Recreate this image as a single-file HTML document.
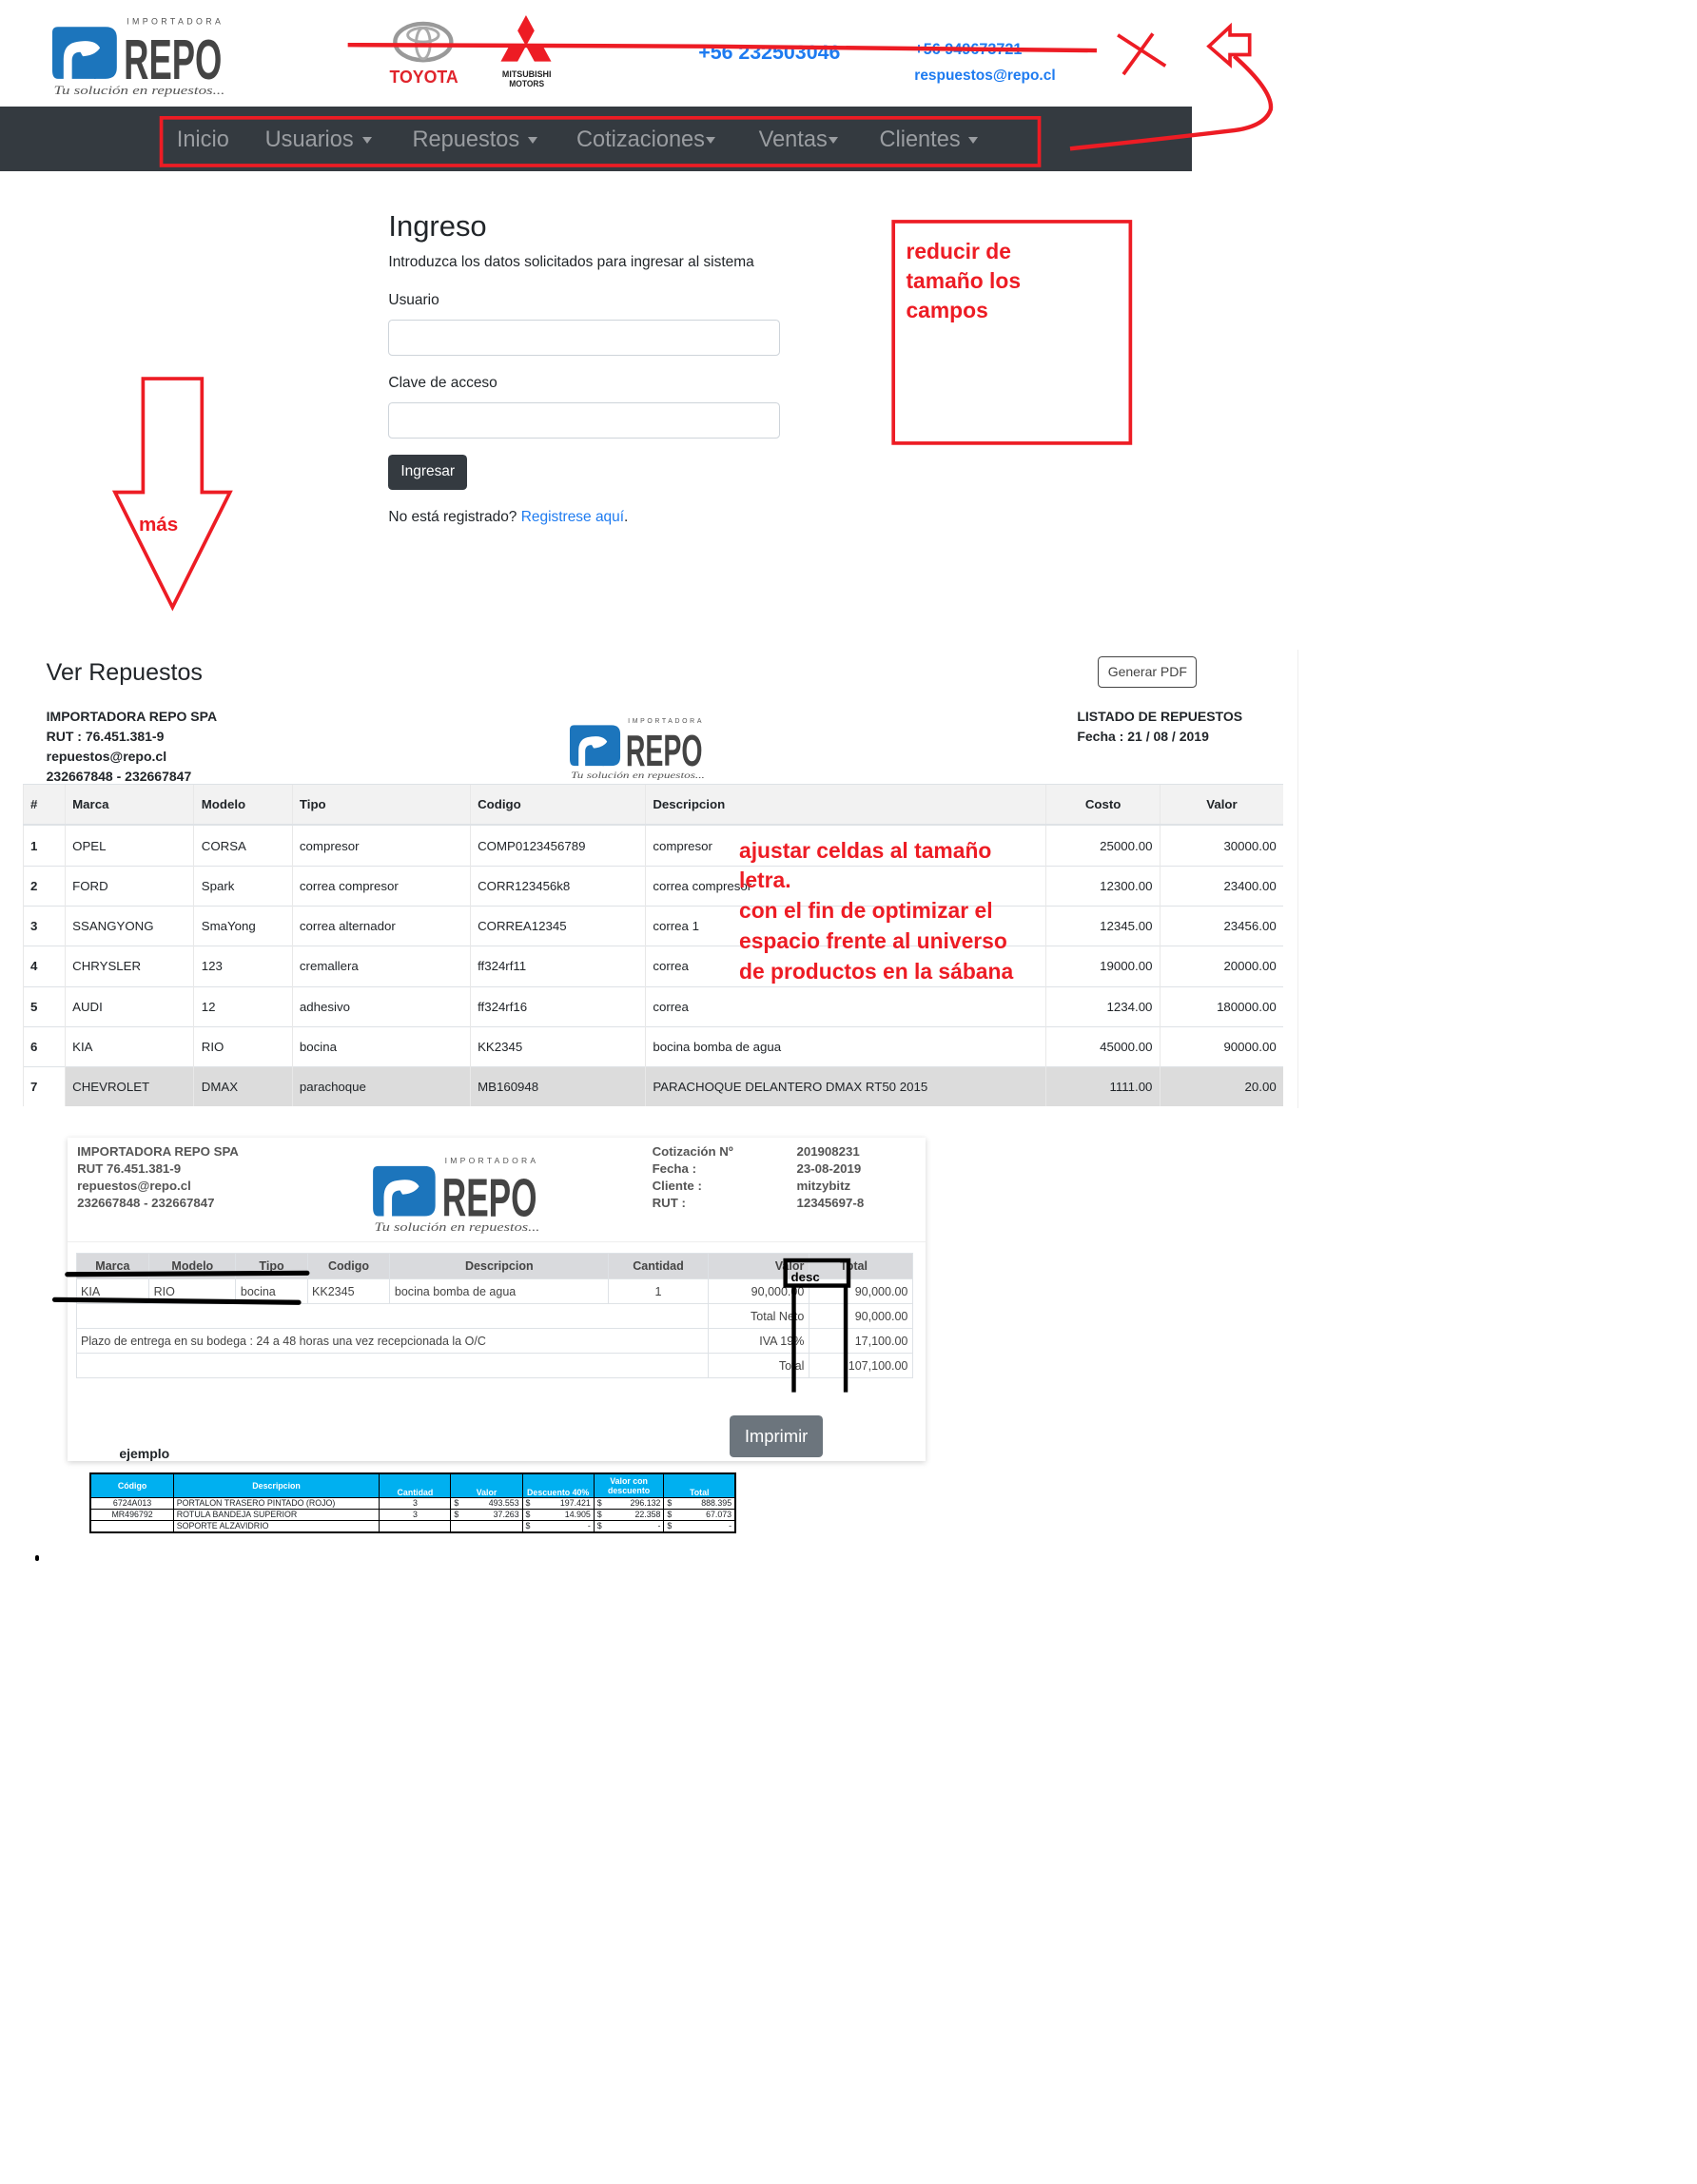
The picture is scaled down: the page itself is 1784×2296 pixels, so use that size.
<!DOCTYPE html>
<html><head><meta charset="utf-8">
<style>
html,body{margin:0;padding:0;background:#fff;}
body{width:1784px;height:2296px;overflow:hidden;}
#w{zoom:1.4744;width:1210px;height:1557px;position:relative;font-family:"Liberation Sans",sans-serif;color:#212529;}
.a{position:absolute;white-space:nowrap;}
.nav span{position:absolute;top:14px;font-size:16px;color:#9a9da1;}
.car{display:inline-block;width:0;height:0;border-left:4px solid transparent;border-right:4px solid transparent;border-top:5px solid #9a9da1;margin-left:6px;vertical-align:middle;}
.red{color:#ed1c24;font-weight:bold;}
table{border-collapse:collapse;}
.t1{position:absolute;left:16px;top:559px;width:899px;font-size:9px;}
.t1 td{height:28px;border-top:1px solid #dee2e6;padding:0 5px;border-left:1px solid #e8e8e8;}
.t1 tr.h td{background:#f2f2f2;font-weight:bold;border-bottom:2px solid #dee2e6;}
.t2 td{border:1px solid #dee2e6;font-size:8.5px;color:#444;padding:0 3px;height:17px;}
.t3 td{border:1px solid #000;font-size:6px;padding:0 2px;height:7.5px;}
</style></head><body><div id="w">

<svg class="a" style="left:37px;top:10px" width="124" height="60" viewBox="0 0 124 60">
<path d="M4 9 H38 Q46 9 46 17 V38 Q46 46 38 46 H30 L20 30 Q30 30 34 24 Q30 17 16 20 Q8 22 8 32 V46 H4 Q0 46 0 40 V13 Q0 9 4 9Z" fill="#1c75bc"/>
<path d="M14 46 V33 Q14 27 20 27 L31 46Z" fill="#1c75bc"/>
<text x="53" y="7" font-size="6" fill="#555" letter-spacing="2.3" font-family="Liberation Sans">IMPORTADORA</text>
<text x="51" y="46" font-size="40" fill="#444" font-weight="bold" textLength="70" lengthAdjust="spacingAndGlyphs" font-family="Liberation Sans">REPO</text>
<text x="1" y="57" font-size="8.5" fill="#555" font-style="italic" textLength="122" lengthAdjust="spacingAndGlyphs" font-family="Liberation Serif">Tu solución en repuestos...</text>
</svg>

<svg class="a" style="left:277px;top:15px" width="52" height="46" viewBox="0 0 52 46">
<ellipse cx="25" cy="15" rx="20" ry="13" fill="none" stroke="#999" stroke-width="3"/>
<ellipse cx="25" cy="10" rx="11" ry="5" fill="none" stroke="#aaa" stroke-width="2"/>
<ellipse cx="25" cy="16" rx="5" ry="11" fill="none" stroke="#aaa" stroke-width="2"/>
<text x="1" y="44" font-size="12.5" font-weight="bold" fill="#e0242c" textLength="49" lengthAdjust="spacingAndGlyphs" font-family="Liberation Sans">TOYOTA</text>
</svg>
<svg class="a" style="left:354px;top:11px" width="42" height="52" viewBox="0 0 42 52">
<polygon points="21,0 27,11 21,22 15,11" fill="#ed1c24"/>
<polygon points="21,22 33,22 39,33 27,33" fill="#ed1c24"/>
<polygon points="21,22 9,22 3,33 15,33" fill="#ed1c24"/>
<text x="4" y="44" font-size="6.5" font-weight="bold" fill="#222" textLength="35" lengthAdjust="spacingAndGlyphs">MITSUBISHI</text>
<text x="9" y="51" font-size="6.5" font-weight="bold" fill="#222" textLength="25" lengthAdjust="spacingAndGlyphs">MOTORS</text>
</svg>

<div class="a" style="left:498px;top:29px;font-size:14.5px;font-weight:bold;color:#1e7bf0;">+56 232503046</div>
<div class="a" style="left:652px;top:29px;font-size:11px;font-weight:bold;color:#1e7bf0;">+56 949673721</div>
<div class="a" style="left:652px;top:48px;font-size:10.5px;font-weight:bold;color:#1e7bf0;">respuestos@repo.cl</div>

<div class="a nav" style="left:0;top:76px;width:850px;height:46px;background:#343a40;">
<span style="left:126px">Inicio</span>
<span style="left:189px">Usuarios<i class="car"></i></span>
<span style="left:294px">Repuestos<i class="car"></i></span>
<span style="left:411px">Cotizaciones<i class="car" style="margin-left:1px"></i></span>
<span style="left:541px">Ventas<i class="car" style="margin-left:1px"></i></span>
<span style="left:627px">Clientes<i class="car"></i></span>
</div>

<svg class="a" style="left:0;top:0" width="1210" height="460" viewBox="0 0 1210 460">
<polyline points="248,32 500,33 782,36" fill="none" stroke="#ed1c24" stroke-width="3"/>
<rect x="115" y="84" width="626" height="34" fill="none" stroke="#ed1c24" stroke-width="2.5"/>
<line x1="797" y1="25" x2="831" y2="47" stroke="#ed1c24" stroke-width="2.5"/>
<line x1="822" y1="24" x2="801" y2="53" stroke="#ed1c24" stroke-width="2.5"/>
<polygon points="862,33 877,19 877,25 891,25 891,39 877,39 877,46" fill="none" stroke="#ed1c24" stroke-width="2.5"/>
<path d="M880 40 Q908 65 906 78 Q902 90 880 93 Q820 100 763 106" fill="none" stroke="#ed1c24" stroke-width="3"/>
<rect x="637" y="158" width="169" height="158" fill="none" stroke="#ed1c24" stroke-width="2.5"/>
<polygon points="102,270 144,270 144,351 164,351 123,433 82,351 102,351" fill="none" stroke="#ed1c24" stroke-width="2.5"/>
</svg>
<div class="a red" style="left:646px;top:169px;font-size:15.5px;line-height:21px;">reducir de<br>tamaño los<br>campos</div>
<div class="a red" style="left:99px;top:366px;font-size:14px;">más</div>

<div class="a" style="left:277px;top:149px;font-size:21px;">Ingreso</div>
<div class="a" style="left:277px;top:181px;font-size:10.5px;">Introduzca los datos solicitados para ingresar al sistema</div>
<div class="a" style="left:277px;top:208px;font-size:10.5px;">Usuario</div>
<div class="a" style="left:277px;top:228px;width:278px;height:24px;border:1px solid #ced4da;border-radius:3px;"></div>
<div class="a" style="left:277px;top:267px;font-size:10.5px;">Clave de acceso</div>
<div class="a" style="left:277px;top:287px;width:278px;height:24px;border:1px solid #ced4da;border-radius:3px;"></div>
<div class="a" style="left:277px;top:324px;width:56px;height:25px;background:#343a40;border-radius:3px;color:#fff;font-size:10.5px;line-height:25px;text-align:center;">Ingresar</div>
<div class="a" style="left:277px;top:363px;font-size:10.5px;">No está registrado? <span style="color:#1e7bf0">Registrese aquí</span>.</div>

<div class="a" style="left:925px;top:463px;width:1px;height:327px;background:#eee;"></div>
<div class="a" style="left:33px;top:470px;font-size:17px;">Ver Repuestos</div>
<div class="a" style="left:783px;top:468px;width:69px;height:21px;border:1px solid #444;border-radius:3px;font-size:9.5px;color:#444;line-height:21px;text-align:center;">Generar PDF</div>
<div class="a" style="left:33px;top:504px;font-size:9.5px;font-weight:bold;line-height:14.2px;">IMPORTADORA REPO SPA<br>RUT : 76.451.381-9<br>repuestos@repo.cl<br>232667848 - 232667847</div>
<svg class="a" style="left:406px;top:510px" width="97" height="47" viewBox="0 0 124 60">
<path d="M4 9 H38 Q46 9 46 17 V38 Q46 46 38 46 H30 L20 30 Q30 30 34 24 Q30 17 16 20 Q8 22 8 32 V46 H4 Q0 46 0 40 V13 Q0 9 4 9Z" fill="#1c75bc"/>
<path d="M14 46 V33 Q14 27 20 27 L31 46Z" fill="#1c75bc"/>
<text x="53" y="7" font-size="6" fill="#555" letter-spacing="2.3">IMPORTADORA</text>
<text x="51" y="46" font-size="40" fill="#444" font-weight="bold" textLength="70" lengthAdjust="spacingAndGlyphs">REPO</text>
<text x="1" y="57" font-size="8.5" fill="#555" font-style="italic" textLength="122" lengthAdjust="spacingAndGlyphs" font-family="Liberation Serif">Tu solución en repuestos...</text>
</svg>
<div class="a" style="left:768px;top:504px;font-size:9.5px;font-weight:bold;line-height:14.2px;">LISTADO DE REPUESTOS<br>Fecha : 21 / 08 / 2019</div>

<table class="t1">
<colgroup><col style="width:30px"><col style="width:92px"><col style="width:70px"><col style="width:127px"><col style="width:125px"><col style="width:286px"><col style="width:81px"><col style="width:88px"></colgroup>
<tr class="h"><td>#</td><td>Marca</td><td>Modelo</td><td>Tipo</td><td>Codigo</td><td>Descripcion</td><td style="text-align:center">Costo</td><td style="text-align:center">Valor</td></tr>
<tr><td><b>1</b></td><td>OPEL</td><td>CORSA</td><td>compresor</td><td>COMP0123456789</td><td>compresor</td><td align="right">25000.00</td><td align="right">30000.00</td></tr>
<tr><td><b>2</b></td><td>FORD</td><td>Spark</td><td>correa compresor</td><td>CORR123456k8</td><td>correa compresor</td><td align="right">12300.00</td><td align="right">23400.00</td></tr>
<tr><td><b>3</b></td><td>SSANGYONG</td><td>SmaYong</td><td>correa alternador</td><td>CORREA12345</td><td>correa 1</td><td align="right">12345.00</td><td align="right">23456.00</td></tr>
<tr><td><b>4</b></td><td>CHRYSLER</td><td>123</td><td>cremallera</td><td>ff324rf11</td><td>correa</td><td align="right">19000.00</td><td align="right">20000.00</td></tr>
<tr><td><b>5</b></td><td>AUDI</td><td>12</td><td>adhesivo</td><td>ff324rf16</td><td>correa</td><td align="right">1234.00</td><td align="right">180000.00</td></tr>
<tr><td><b>6</b></td><td>KIA</td><td>RIO</td><td>bocina</td><td>KK2345</td><td>bocina bomba de agua</td><td align="right">45000.00</td><td align="right">90000.00</td></tr>
<tr style="background:#dcdcdc"><td style="background:#fff"><b>7</b></td><td>CHEVROLET</td><td>DMAX</td><td>parachoque</td><td>MB160948</td><td>PARACHOQUE DELANTERO DMAX RT50 2015</td><td align="right">1111.00</td><td align="right">20.00</td></tr>
</table>
<div class="a red" style="left:527px;top:596px;font-size:15.5px;line-height:21.5px;">ajustar celdas al tamaño<br>letra.<br>con el fin de optimizar el<br>espacio frente al universo<br>de productos en la sábana</div>

<div class="a" style="left:48px;top:811px;width:612px;height:231px;background:#fff;box-shadow:0 1px 4px rgba(0,0,0,.18);"></div>
<div class="a" style="left:48px;top:885px;width:612px;height:1px;background:#eee;"></div>
<div class="a" style="left:55px;top:815px;font-size:9px;font-weight:bold;color:#555;line-height:12.4px;">IMPORTADORA REPO SPA<br>RUT 76.451.381-9<br>repuestos@repo.cl<br>232667848 - 232667847</div>
<svg class="a" style="left:266px;top:823px" width="120" height="58" viewBox="0 0 124 60">
<path d="M4 9 H38 Q46 9 46 17 V38 Q46 46 38 46 H30 L20 30 Q30 30 34 24 Q30 17 16 20 Q8 22 8 32 V46 H4 Q0 46 0 40 V13 Q0 9 4 9Z" fill="#1c75bc"/>
<path d="M14 46 V33 Q14 27 20 27 L31 46Z" fill="#1c75bc"/>
<text x="53" y="7" font-size="6" fill="#555" letter-spacing="2.3">IMPORTADORA</text>
<text x="51" y="46" font-size="40" fill="#444" font-weight="bold" textLength="70" lengthAdjust="spacingAndGlyphs">REPO</text>
<text x="1" y="57" font-size="8.5" fill="#555" font-style="italic" textLength="122" lengthAdjust="spacingAndGlyphs" font-family="Liberation Serif">Tu solución en repuestos...</text>
</svg>
<div class="a" style="left:465px;top:815px;font-size:9px;font-weight:bold;color:#555;line-height:12.4px;">Cotización Nº<br>Fecha :<br>Cliente :<br>RUT :</div>
<div class="a" style="left:568px;top:815px;font-size:9px;font-weight:bold;color:#555;line-height:12.4px;">201908231<br>23-08-2019<br>mitzybitz<br>12345697-8</div>

<table class="t2 a" style="left:54px;top:893px;width:597px;">
<colgroup><col style="width:52px"><col style="width:62px"><col style="width:51px"><col style="width:59px"><col style="width:156px"><col style="width:71px"><col style="width:72px"><col style="width:74px"></colgroup>
<tr style="background:#d9dadd;font-weight:bold"><td align="center" style="height:18px"><b>Marca</b></td><td align="center"><b>Modelo</b></td><td align="center"><b>Tipo</b></td><td align="center"><b>Codigo</b></td><td align="center"><b>Descripcion</b></td><td align="center"><b>Cantidad</b></td><td align="right"><b>Valor</b></td><td><b>&nbsp;&nbsp;&nbsp;&nbsp;&nbsp;&nbsp;&nbsp;&nbsp;Total</b></td></tr>
<tr><td>KIA</td><td>RIO</td><td>bocina</td><td>KK2345</td><td>bocina bomba de agua</td><td align="center">1</td><td align="right">90,000.00</td><td align="right">90,000.00</td></tr>
<tr><td colspan="6"></td><td align="right">Total Neto</td><td align="right">90,000.00</td></tr>
<tr><td colspan="6">Plazo de entrega en su bodega : 24 a 48 horas una vez recepcionada la O/C</td><td align="right">IVA 19%</td><td align="right">17,100.00</td></tr>
<tr><td colspan="6"></td><td align="right">Total</td><td align="right">107,100.00</td></tr>
</table>
<svg class="a" style="left:0;top:880px" width="700" height="120" viewBox="0 880 700 120">
<line x1="48" y1="909" x2="219" y2="908" stroke="#000" stroke-width="3.5" stroke-linecap="round"/>
<line x1="39" y1="927" x2="213" y2="929" stroke="#000" stroke-width="3.5" stroke-linecap="round"/>
<rect x="560" y="899" width="45" height="18" fill="none" stroke="#000" stroke-width="3"/>
<line x1="566" y1="917" x2="566" y2="993" stroke="#000" stroke-width="3"/>
<line x1="603" y1="917" x2="603" y2="993" stroke="#000" stroke-width="3"/>
<text x="564" y="914" font-size="9" font-weight="bold" fill="#000">desc</text>
</svg>
<div class="a" style="left:520px;top:1009px;width:67px;height:30px;background:#6c757d;border-radius:3px;color:#fff;font-size:12.5px;line-height:30px;text-align:center;">Imprimir</div>
<div class="a" style="left:85px;top:1031px;font-size:9.5px;font-weight:bold;">ejemplo</div>

<table class="t3 a" style="left:64px;top:1050px;width:461px;border:1.5px solid #000;">
<colgroup><col style="width:59px"><col style="width:147px"><col style="width:51px"><col style="width:51px"><col style="width:51px"><col style="width:50px"><col style="width:51px"></colgroup>
<tr style="background:#00b0f0;color:#fff;font-weight:bold"><td align="center" style="height:16px">Código</td><td align="center">Descripcion</td><td align="center" style="vertical-align:bottom">Cantidad</td><td align="center" style="vertical-align:bottom">Valor</td><td align="center" style="vertical-align:bottom">Descuento 40%</td><td align="center">Valor con<br>descuento</td><td align="center" style="vertical-align:bottom">Total</td></tr>
<tr><td align="center">6724A013</td><td>PORTALON TRASERO PINTADO (ROJO)</td><td align="center">3</td><td>$<span style="float:right">493.553</span></td><td>$<span style="float:right">197.421</span></td><td>$<span style="float:right">296.132</span></td><td>$<span style="float:right">888.395</span></td></tr>
<tr><td align="center">MR496792</td><td>ROTULA BANDEJA SUPERIOR</td><td align="center">3</td><td>$<span style="float:right">37.263</span></td><td>$<span style="float:right">14.905</span></td><td>$<span style="float:right">22.358</span></td><td>$<span style="float:right">67.073</span></td></tr>
<tr><td></td><td>SOPORTE ALZAVIDRIO</td><td></td><td></td><td>$<span style="float:right">-</span></td><td>$<span style="float:right">-</span></td><td>$<span style="float:right">-</span></td></tr>
</table>
<div class="a" style="left:25px;top:1109px;width:3px;height:4px;background:#000;border-radius:2px;"></div>

</div></body></html>
